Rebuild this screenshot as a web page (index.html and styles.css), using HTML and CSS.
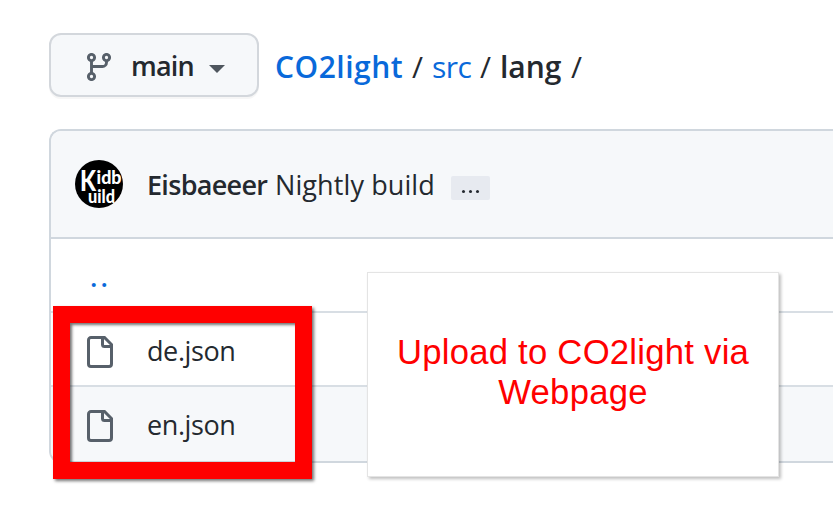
FILE: index.html
```html
<!DOCTYPE html>
<html lang="en">
<head>
<meta charset="utf-8">
<title>CO2light/src/lang</title>
<link rel="stylesheet" href="styles.css">
</head>
<body>
<header class="toolbar">
  <button class="branch">
    <svg class="branch-icon" viewBox="0 0 24 28"><circle cx="4.5" cy="4.5" r="3.1"/><circle cx="19.5" cy="4.5" r="3.1"/><circle cx="4.5" cy="23.5" r="3.1"/><path d="M4.5 8v12M19.5 8v1.5a4 4 0 0 1-4 4H4.5"/></svg>
    <span class="branch-name">main</span>
    <span class="caret"></span>
  </button>
  <nav class="crumbs">
    <a class="repo">CO2light</a><span class="slash">/</span><a class="dir">src</a><span class="slash">/</span><strong class="current">lang</strong><span class="slash">/</span>
  </nav>
</header>
<main class="files">
  <div class="commit">
    <svg class="avatar" viewBox="0 0 48 48"><circle cx="24" cy="24" r="24"/><text class="logo-k" x="5" y="31" textLength="16" lengthAdjust="spacingAndGlyphs">K</text><text class="logo" x="21.5" y="24" textLength="25" lengthAdjust="spacingAndGlyphs">idb</text><text class="logo" x="13" y="43" textLength="27" lengthAdjust="spacingAndGlyphs">uild</text></svg>
    <strong class="author">Eisbaeeer</strong>
    <span class="message">Nightly build</span>
    <span class="more"><i></i><i></i><i></i></span>
  </div>
  <div class="row parent"><a class="up">..</a></div>
  <div class="row">
    <svg class="file-icon" viewBox="0 0 26 32"><path d="M4 1.5h13.5l7 7V28a2.5 2.5 0 0 1-2.5 2.5H4A2.5 2.5 0 0 1 1.5 28V4A2.5 2.5 0 0 1 4 1.5zM15.5 1.5v7a2 2 0 0 0 2 2h7"/></svg>
    <span class="name">de.json</span>
  </div>
  <div class="row shaded">
    <svg class="file-icon" viewBox="0 0 26 32"><path d="M4 1.5h13.5l7 7V28a2.5 2.5 0 0 1-2.5 2.5H4A2.5 2.5 0 0 1 1.5 28V4A2.5 2.5 0 0 1 4 1.5zM15.5 1.5v7a2 2 0 0 0 2 2h7"/></svg>
    <span class="name">en.json</span>
  </div>
</main>
<div class="highlight"></div>
<aside class="note">Upload to CO2light via<br>Webpage</aside>
</body>
</html>
```
FILE: styles.css
```css
* { box-sizing: border-box; }
body {
  margin: 0;
  padding: 33px 0 0 49px;
  height: 513px;
  overflow: hidden;
  position: relative;
  background: #fff;
  color: #24292f;
  font-family: "Open Sans", "Noto Sans", sans-serif;
  font-size: 27px;
}
.toolbar { display: flex; align-items: center; height: 64px; }
.branch {
  display: flex;
  align-items: center;
  flex: none;
  width: 210px;
  height: 64px;
  padding: 0 0 0 36px;
  border: 2px solid #d3d7dc;
  border-radius: 12px;
  background: #f6f8fa;
  box-shadow: 0 2px 0 rgba(27, 31, 36, .04);
  color: #24292f;
  font: 600 27px/40px "Open Sans", sans-serif;
}
.branch-icon { width: 24px; height: 28px; margin-top: 4px; fill: none; stroke: #57606a; stroke-width: 2.9; flex: none; }
.branch-name { width: 62px; margin: 2px 0 0 20px; letter-spacing: -.8px; text-align: left; }
.caret {
  margin: 7px 0 0 16px;
  border: 8px solid transparent;
  border-top-color: #4f565e;
  border-bottom: 0;
}
.crumbs { display: flex; margin: 4px 0 0 16px; font-size: 30px; line-height: 40px; white-space: nowrap; }
.repo { width: 128px; color: #0969da; font-weight: 600; letter-spacing: .5px; }
.dir { width: 39px; color: #0969da; letter-spacing: -.5px; }
.current { width: 62px; font-weight: 600; letter-spacing: 0; }
.slash { width: 29px; text-align: center; }
.files {
  height: 334px;
  margin-top: 32px;
  border: 2px solid #d0d7de;
  border-right: 0;
  border-radius: 12px 0 0 12px;
  overflow: hidden;
}
.commit {
  display: flex;
  align-items: center;
  height: 108px;
  padding-left: 24px;
  border-bottom: 2px solid #d0d7de;
  background: #f6f8fa;
  white-space: nowrap;
}
.avatar { width: 48px; height: 48px; flex: none; }
.logo-k, .logo { fill: #fff; font-family: Lato, sans-serif; font-weight: 900; }
.logo-k { font-size: 28px; }
.logo { font-size: 19.5px; }
.author { width: 120px; margin-left: 24px; font-weight: 600; letter-spacing: -.7px; }
.message { width: 159px; margin-left: 8px; letter-spacing: .1px; }
.more {
  display: flex;
  justify-content: center;
  gap: 4px;
  width: 39px;
  height: 24px;
  margin: 8px 0 0 17px;
  padding-top: 14px;
  border-radius: 2px;
  background: #e7eaf0;
}
.more i { width: 3px; height: 3px; border-radius: 50%; background: #24292f; }
.row { display: flex; align-items: center; height: 74px; padding-left: 36px; }
.row + .row { border-top: 2px solid #d8dee4; }
.parent { height: 72px; }
.up { margin: 2px 0 0 3px; color: #0969da; font-weight: 600; letter-spacing: 3px; }
.shaded { height: 76px; background: #f6f8fa; }
.file-icon { width: 26px; height: 32px; margin-top: 5px; fill: none; stroke: #57606a; stroke-width: 3; flex: none; }
.shaded .file-icon { margin-top: 4px; }
.name { margin: 3px 0 0 34px; letter-spacing: -.4px; }
.shaded .name { margin-top: 1px; }
.highlight {
  position: absolute;
  left: 53px;
  top: 306px;
  width: 259px;
  height: 173px;
  border: 17px solid #f00;
  box-shadow: 2px 2px 3px rgba(0, 0, 0, .55), inset 2px 2px 3px rgba(0, 0, 0, .55);
}
.note {
  position: absolute;
  left: 367px;
  top: 272px;
  width: 412px;
  height: 205px;
  padding: 59px 0 0 0;
  border: 1px solid #e4e4e4;
  background: #fff;
  box-shadow: 2px 2px 3px rgba(0, 0, 0, .25);
  color: #f00;
  font: 34.67px/40px "Liberation Sans", Arial, sans-serif;
  letter-spacing: .25px;
  text-align: center;
}
```
